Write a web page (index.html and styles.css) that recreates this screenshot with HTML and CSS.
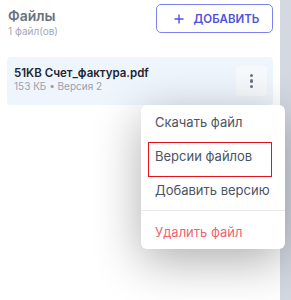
FILE: index.html
```html
<!DOCTYPE html>
<html lang="ru">
<head>
<meta charset="utf-8">
<link rel="stylesheet" href="styles.css">
</head>
<body>
<div class="page">
  <div class="panel">
    <div class="header">
      <div class="titles">
        <div class="title">Файлы</div>
        <div class="subtitle">1 файл(ов)</div>
      </div>
      <button class="add-btn">
        <svg width="10" height="10" viewBox="0 0 10 10"><path d="M5 0.5v9M0.5 5h9" stroke="#4f52d9" stroke-width="1.4" fill="none"/></svg>
        <span>ДОБАВИТЬ</span>
      </button>
    </div>
    <div class="card">
      <div class="file-info">
        <div class="file-name">51KB Счет_фактура.pdf</div>
        <div class="file-meta">153 КБ • Версия 2</div>
      </div>
      <div class="kebab">
        <span class="dot"></span><span class="dot"></span><span class="dot"></span>
      </div>
    </div>
    <div class="menu">
      <div class="menu-item">Скачать файл</div>
      <div class="menu-item highlighted">Версии файлов</div>
      <div class="menu-item">Добавить версию</div>
      <div class="divider"></div>
      <div class="menu-item danger">Удалить файл</div>
    </div>
  </div>
  <div class="side"></div>
</div>
</body>
</html>
```
FILE: styles.css
```css
* { box-sizing: border-box; }
html, body { margin: 0; padding: 0; }
body { font-family: Inter, "Noto Sans", sans-serif; background: #fff; }
.page { display: flex; width: 291px; height: 300px; overflow: hidden; }
.panel { position: relative; width: 280px; height: 300px; background: #fff; }
.side { flex: 1; background: #d4d8e1; }
.header { display: flex; justify-content: space-between; align-items: flex-start; padding: 4px 7px 0 8px; }
.titles { padding-top: 3px; }
.title { font-size: 14px; line-height: 18px; font-weight: 600; color: #6b7280; }
.subtitle { font-size: 10px; line-height: 13px; color: #a3a9b4; }
.add-btn { display: flex; align-items: center; justify-content: center; gap: 10px; width: 117px; height: 29px; padding: 0 0 0 4px; border: 1px solid #7f82ee; border-radius: 5px; background: #fff; font-family: Inter, sans-serif; font-size: 11.5px; font-weight: 600; color: #4f52d9; letter-spacing: 0; }
.card { display: flex; justify-content: space-between; align-items: flex-start; margin: 19px 7px 0 7px; height: 48px; padding: 9px 6px 0 7px; background: #eef5fd; border-radius: 4px; }
.file-name { font-size: 11.5px; line-height: 14px; font-weight: 600; color: #1f2533; }
.file-meta { font-size: 10px; line-height: 12px; color: #9aa1ad; }
.kebab { width: 31px; height: 30px; background: #f7fafd; border-radius: 4px; display: flex; flex-direction: column; align-items: center; justify-content: center; gap: 2px; }
.dot { width: 3.5px; height: 3.5px; border-radius: 50%; background: #6b7280; }
.menu { position: absolute; left: 141px; top: 105px; width: 144px; background: #fff; border-radius: 6px; box-shadow: 0 12px 48px rgba(0,0,0,0.32); }
.menu-item { position: relative; height: 34px; display: flex; align-items: center; padding-left: 14px; font-size: 13px; color: #4b5563; }
.menu-item.highlighted::after { content: ""; position: absolute; left: 7px; top: 3px; width: 122px; height: 33px; border: 1.5px solid #e8121a; }
.divider { height: 1px; background: #e8eaee; margin: 3px 0 4px; }
.menu-item.danger { color: #f2636e; }
```
